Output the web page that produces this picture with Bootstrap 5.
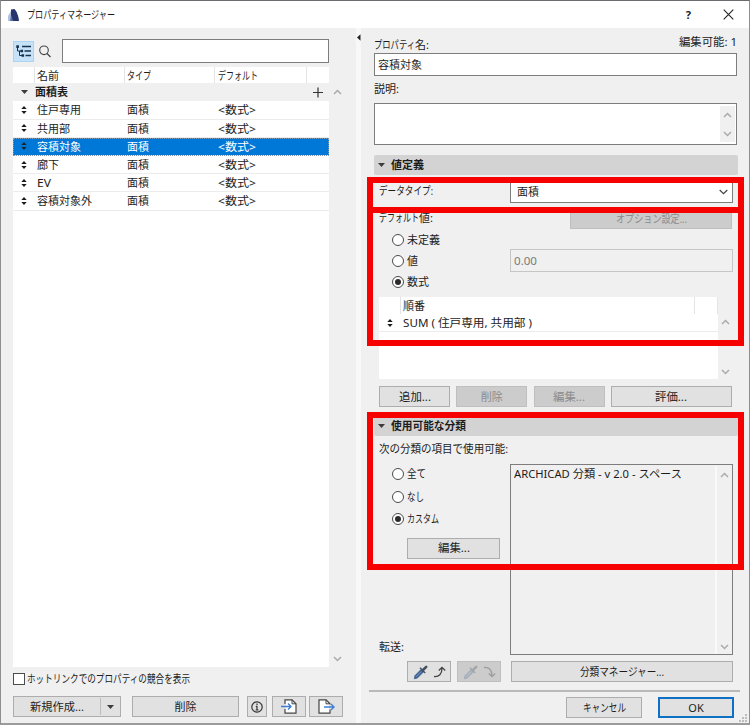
<!DOCTYPE html>
<html lang="ja">
<head>
<meta charset="utf-8">
<meta name="viewport" content="width=device-width, initial-scale=1">
<title>プロパティマネージャー</title>
<link href="https://cdn.jsdelivr.net/npm/bootstrap@5.3.0/dist/css/bootstrap.min.css" rel="stylesheet">
<style>
body{font-family:"Noto Sans","Noto Sans CJK JP",sans-serif;font-size:11px;line-height:16px;color:#1c1c1c;background:#f0f0f0;overflow:hidden}
input,button{font-family:"Noto Sans","Noto Sans CJK JP",sans-serif}
.win{width:750px;height:725px;border:1px solid #8f8f8f;border-top-color:#6d6a70;border-bottom:2px solid #9b9b9b;background:#f0f0f0}
.titlebar{height:27px;padding:0 15px 0 7px}
.help{margin-right:32px;font-size:11px}
.fit{display:inline-block;white-space:nowrap;transform-origin:left center}
.ic,.sbar svg{display:block;flex:none}
.pane-l{width:344px;padding:11px 0 0 12px}
.splitter{width:5px;background:#f8f8f8;padding-top:2px}
.gutter{width:11px}
.tree-btn{width:21px;height:21px;background:#c6e2f8;border:1px solid #add3f0}
.lens{margin:0 11px 0 5px}
.field{border:1px solid #7d7d7d;border-radius:0;background:#fff;font-size:11px;padding:0 3px;min-height:0;color:#1c1c1c;line-height:16px}
.search{width:267px;height:24px}
.list{height:600px;margin-top:4px}
.list-body{width:316px;background:#fff}
.trow{height:18.2px;border-bottom:1px solid #ececec;line-height:17px}
.trow>*{flex:none}
.c-ic{width:22px;display:flex;align-items:center;justify-content:center}
.c-name{width:90px;padding-left:2px}
.c-type{width:90px;padding-left:2px}
.c-def{width:92px;padding-left:3px}
.c-ord{width:294px;padding-left:2px}
.c-end{width:23px}
.c-expr{padding-left:2px}
.thead-row{height:17px;border:0;line-height:18px}
.list .thead-row{height:16.2px}
.thead-row>*{border-right:1px solid #e4e4e4;align-self:stretch}
.group-row{background:#f0f0f0;border:0;line-height:16px}
.picked{background:#0078d7;color:#fff;outline:1px dotted #8a9cb0;outline-offset:-1px}
.sbar{width:16px;padding:6px 0 5px}
.list>.sbar{padding-top:22px}
.btn-w{--bs-btn-padding-x:0;--bs-btn-padding-y:0;--bs-btn-font-size:11px;--bs-btn-line-height:16px;--bs-btn-border-radius:0;--bs-btn-color:#1c1c1c;--bs-btn-bg:#e1e1e1;--bs-btn-border-color:#adadad;--bs-btn-hover-bg:#e5f1fb;--bs-btn-hover-border-color:#0078d7;--bs-btn-hover-color:#1c1c1c;--bs-btn-disabled-color:#8b8b8b;--bs-btn-disabled-bg:#cccccc;--bs-btn-disabled-border-color:#bfbfbf;--bs-btn-disabled-opacity:1;height:21px;display:flex;align-items:center;justify-content:center;flex:none}
.btn-ok{--bs-btn-border-color:#0f70c4;--bs-btn-border-width:2px}
.w71{width:71px}.w76{width:76px}.w93{width:93px}.w107{width:107px}.w121{width:121px}.w222{width:222px}.w44{width:44px}.w34{width:34px}.w20{width:20px}.w162{width:162px}
.split-main{width:86px}
.split-drop{width:20px;border-left:1px solid #bdbdbd;height:17px}
.hotlink{gap:2px;height:24px}
.actions{margin-top:5px}
.gap-a{margin-left:11px}.gap-b{margin-left:8px}.gap-c{margin-left:5px}.gap-d{margin-left:3px}
.cbox{width:12px;height:12px;border:1px solid #4c4c4c;background:#fff;flex:none}
.rad{width:12px;height:12px;border:1px solid #4b4b4b;border-radius:50%;background:#fff;flex:none;display:flex;align-items:center;justify-content:center}
.rad.on::after{content:"";width:6px;height:6px;border-radius:50%;background:#2b2b2b}
.rline{height:21px;gap:3px;padding-left:18px}
.rline.tall{height:22.6px}
.rlabel{width:100px;flex:none}
.pane-r{width:376px;padding-left:12px;margin-left:1px}
.name-head{padding-top:7px;height:25px;width:363px;line-height:13px}
.name-label{padding-top:3px}
.name-box{width:363px;height:23px}
.desc-head{height:27px;padding-top:5px}
.descr{width:363px;height:42px;padding:2px 1px 2px 0}
.descr .sbar{width:15px;background:#f0f0f0}
.sect{background:#d3d3d3;border-radius:2px;width:364px;height:20px;font-weight:700;padding-left:4px;gap:6px}
.sect-a{margin-top:10px}
.sect-b{margin-top:9px}
.indent{padding-left:5px}
.indent>*{flex:none}
.type-row{padding-top:6px;height:31px}
.type-label{width:131px;padding-top:2px}
.def-row{height:23px;padding-top:2px}
.def-label{width:191px;padding-top:2px}
.dropdn{width:223px;height:22px;padding:0 4px 0 6px}
.valbox{width:223px;height:23px;background:#f0f0f0;border-color:#c6c6c6;color:#7b7b7b}
.exprs{height:82px;margin-top:5px}
.exprs .list-body{width:339px}
.exprs .sbar{width:14px;padding:22px 0 4px}
.expr-actions{margin-top:7px;gap:6.3px}
.cls-head{height:28px;padding-top:5px}
.cls-left{width:136px;margin-top:-1px;flex:none}
.cls-edit{margin:7px 0 0 33px}
.clsbox{width:223px;height:191px;background:#f0f0f0;padding-top:1px;flex:none}
.clsbox .sbar{width:17px;border-left:2px solid #f9f9f9;padding:6px 0 4px}
.transfer{margin-top:6px;padding-left:33px}
.gap-e{margin-left:6px}.gap-f{margin-left:10px}
.pip-on{--tube:#3c5f91;--shine:#7f9cc6;--cap:#44505e}
.pip-off{--tube:#a5adb9;--shine:#c2c8d0;--cap:#a3a6aa}
.rule{height:2px;background:#b9b9b9;margin:8px 0 5px -5px;width:371px}
.confirm{width:360px;gap:16px}
.frame{position:absolute;left:367px;width:377px;border:6px solid #f60000;pointer-events:none}
.frame-a{top:177px;height:36px}
.frame-b{top:207px;height:139px}
.frame-c{top:412px;height:158px}
.grip{position:absolute;right:3px;bottom:3px}
</style>
<script src="https://cdn.jsdelivr.net/npm/bootstrap@5.3.0/dist/js/bootstrap.bundle.min.js"></script>
</head>
<body>
<svg width="0" height="0" class="position-absolute">
<defs>
<symbol id="up" viewBox="0 0 9 6"><path d="M1 5 4.5 1.5 8 5" fill="none" stroke="#ababab" stroke-width="1.5"/></symbol>
<symbol id="dn" viewBox="0 0 9 6"><path d="M1 1 4.5 4.5 8 1" fill="none" stroke="#ababab" stroke-width="1.5"/></symbol>
<symbol id="sort" viewBox="0 0 6 8"><path d="M0.3 3 3 0 5.7 3zM0.3 5 3 8 5.7 5z" fill="currentColor"/></symbol>
<symbol id="tri" viewBox="0 0 7 4"><path d="M0 0h7L3.5 4z" fill="#3c3c3c"/></symbol>
<symbol id="pip" viewBox="0 0 16 16"><path d="M1.3 14.8 2 11.6 8 5.6 10.4 8 4.4 14z" fill="var(--tube)" stroke="var(--tube)" stroke-width=".8"/><path d="M3 12.8 8.6 7.2" stroke="var(--shine)" stroke-width="1"/><path d="M7 3.8 12.2 9" stroke="var(--cap)" stroke-width="1.4"/><path d="M9.5 6.5 13.2 2.8" stroke="var(--cap)" stroke-width="2.6" stroke-linecap="round"/></symbol>
</defs>
</svg>
<div class="win position-relative d-flex flex-column">
  <header class="titlebar bg-white d-flex align-items-center">
    <svg class="ic me-2" width="11" height="12" viewBox="0 0 11 12"><path d="M0 12V7L4 0V12z" fill="#b4c2e2"/><path d="M3 .5 6.500 0C8.500 2 10.600 7 11 12H4.500L3 7z" fill="#26356e"/><path d="M3 6 5 12H2z" fill="#5a6fa8"/></svg>
    <span class="fit" data-w="88">プロパティマネージャー</span>
    <span class="ms-auto help fw-bold">?</span>
    <svg class="ic" width="11" height="11" viewBox="0 0 11 11"><path d="M.7.7 10.300 10.300M10.300.7.7 10.300" stroke="#222" stroke-width="1.100"/></svg>
  </header>
  <main class="d-flex flex-grow-1">
    <section class="pane-l flex-shrink-0">
      <div class="d-flex align-items-center">
        <div class="tree-btn d-flex align-items-center justify-content-center"><svg class="ic" width="16" height="12" viewBox="0 0 16 12"><path d="M1.500 1.500V6H5M3.500 6V10.500H6" fill="none" stroke="#17324d" stroke-width="1"/><path d="M6 1.500H15M8.500 6H15M9.500 10.500H15" stroke="#17324d" stroke-width="1.700"/><path d="M.3.300h2.600v2.600H.3zM4.500 4.700h2.600v2.600H4.500zM5.500 9.200h2.600v2.600H5.500z" fill="#17324d"/></svg></div>
        <svg class="ic lens" width="12" height="13" viewBox="0 0 12 13"><circle cx="5" cy="5.300" r="4.300" fill="none" stroke="#444" stroke-width="1.100"/><path d="M8 8.500 11.500 12" stroke="#444" stroke-width="1.300"/></svg>
        <input class="form-control field search" aria-label="検索">
      </div>
      <div class="list d-flex">
        <div class="list-body">
          <div class="trow thead-row d-flex"><span class="c-ic"></span><span class="c-name">名前</span><span class="c-type"><span class="fit" data-w="24">タイプ</span></span><span class="c-def"><span class="fit" data-w="40">デフォルト</span></span></div>
          <div class="trow group-row d-flex align-items-center fw-bold"><span class="c-ic"><svg class="ic" width="7" height="4"><use href="#tri"/></svg></span><span>面積表</span><svg class="ic ms-auto me-1" width="13" height="11" viewBox="0 0 13 11"><path d="M1 5.500H11M6 .5V10.500" stroke="#333" stroke-width="1.200"/></svg></div>
          <div class="trow d-flex align-items-center"><span class="c-ic"><svg class="ic" width="6" height="8"><use href="#sort"/></svg></span><span class="c-name">住戸専用</span><span class="c-type">面積</span><span class="c-def"><span class="fit" data-w="38">&lt;数式&gt;</span></span></div>
          <div class="trow d-flex align-items-center"><span class="c-ic"><svg class="ic" width="6" height="8"><use href="#sort"/></svg></span><span class="c-name">共用部</span><span class="c-type">面積</span><span class="c-def"><span class="fit" data-w="38">&lt;数式&gt;</span></span></div>
          <div class="trow picked d-flex align-items-center"><span class="c-ic"><svg class="ic text-dark" width="6" height="8"><use href="#sort"/></svg></span><span class="c-name">容積対象</span><span class="c-type">面積</span><span class="c-def"><span class="fit" data-w="38">&lt;数式&gt;</span></span></div>
          <div class="trow d-flex align-items-center"><span class="c-ic"><svg class="ic" width="6" height="8"><use href="#sort"/></svg></span><span class="c-name">廊下</span><span class="c-type">面積</span><span class="c-def"><span class="fit" data-w="38">&lt;数式&gt;</span></span></div>
          <div class="trow d-flex align-items-center"><span class="c-ic"><svg class="ic" width="6" height="8"><use href="#sort"/></svg></span><span class="c-name"><span class="fit" data-w="14">EV</span></span><span class="c-type">面積</span><span class="c-def"><span class="fit" data-w="38">&lt;数式&gt;</span></span></div>
          <div class="trow d-flex align-items-center"><span class="c-ic"><svg class="ic" width="6" height="8"><use href="#sort"/></svg></span><span class="c-name">容積対象外</span><span class="c-type">面積</span><span class="c-def"><span class="fit" data-w="38">&lt;数式&gt;</span></span></div>
        </div>
        <div class="sbar d-flex flex-column align-items-center justify-content-between"><svg width="9" height="6"><use href="#up"/></svg><svg width="9" height="6"><use href="#dn"/></svg></div>
      </div>
      <label class="hotlink d-flex align-items-center"><span class="cbox"></span><span class="fit" data-w="163">ホットリンクでのプロパティの競合を表示</span></label>
      <div class="actions d-flex">
        <div class="btn btn-w"><span class="split-main"><span class="fit" data-w="54">新規作成...</span></span><span class="split-drop d-flex align-items-center justify-content-center"><svg class="ic" width="7" height="4"><use href="#tri"/></svg></span></div>
        <button class="btn btn-w w107 gap-a">削除</button>
        <button class="btn btn-w w20 gap-b" aria-label="情報"><svg class="ic" width="12" height="12" viewBox="0 0 12 12"><circle cx="6" cy="6" r="5.200" fill="none" stroke="#333" stroke-width="1.200"/><path d="M6 2.500V4M4.800 5.300H6V9M4.600 9H7.500" fill="none" stroke="#333" stroke-width="1.200"/></svg></button>
        <button class="btn btn-w w34 gap-c" aria-label="読み込み"><svg class="ic" width="17" height="15" viewBox="0 0 17 15"><path d="M4 .8H11L15 4.800V14.200H4z" fill="#fff" stroke="#444" stroke-width="1.200"/><path d="M11 .8V4.800H15" fill="none" stroke="#444"/><path d="M3 7.500h2" stroke="#e1e1e1" stroke-width="5"/><path d="M0 7.500H10M7 4.500 10 7.500 7 10.500" fill="none" stroke="#3f7ed6" stroke-width="1.400"/></svg></button>
        <button class="btn btn-w w34 gap-d" aria-label="書き出し"><svg class="ic" width="17" height="15" viewBox="0 0 17 15"><path d="M1 .8H8L12 4.800V14.200H1z" fill="#fff" stroke="#444" stroke-width="1.200"/><path d="M8 .8V4.800H12" fill="none" stroke="#444"/><path d="M11 8h2" stroke="#e1e1e1" stroke-width="5"/><path d="M6 8H16M13 5 16 8 13 11" fill="none" stroke="#3f7ed6" stroke-width="1.400"/></svg></button>
      </div>
    </section>
    <div class="gutter flex-shrink-0"></div>
    <div class="splitter flex-shrink-0"><svg class="ic" width="5" height="16" viewBox="0 0 5 16"><path d="M4.500 4.300V10.700L1 7.500z" fill="#222"/></svg></div>
    <section class="pane-r flex-shrink-0">
      <div class="name-head d-flex justify-content-between"><span class="name-label"><span class="fit" data-w="41">プロパティ</span>名:</span><span><span class="fit" data-w="58">編集可能: 1</span></span></div>
      <div class="field name-box d-flex align-items-center">容積対象</div>
      <div class="desc-head">説明:</div>
      <div class="field descr d-flex justify-content-end"><div class="sbar d-flex flex-column align-items-center justify-content-between"><svg width="9" height="6"><use href="#up"/></svg><svg width="9" height="6"><use href="#dn"/></svg></div></div>
      <div class="sect sect-a d-flex align-items-center"><svg class="ic" width="7" height="4"><use href="#tri"/></svg><span>値定義</span></div>
      <div class="indent type-row d-flex"><span class="type-label"><span class="fit" data-w="54">データタイプ:</span></span><div class="field dropdn d-flex align-items-center justify-content-between"><span>面積</span><svg class="ic" width="9" height="6" viewBox="0 0 9 6"><path d="M.7 1 4.500 4.700 8.300 1" fill="none" stroke="#444" stroke-width="1.200"/></svg></div></div>
      <div class="indent def-row d-flex"><span class="def-label"><span class="fit" data-w="40">デフォルト</span>値:</span><button class="btn btn-w w162" disabled><span class="fit" data-w="71">オプション設定...</span></button></div>
      <div class="rline d-flex align-items-center"><span class="rad"></span><span>未定義</span></div>
      <div class="rline d-flex align-items-center"><span class="rad"></span><span class="rlabel">値</span><div class="field valbox d-flex align-items-center flex-shrink-0"><span class="fit" data-w="23">0.00</span></div></div>
      <div class="rline d-flex align-items-center"><span class="rad on"></span><span>数式</span></div>
      <div class="indent d-flex exprs">
        <div class="list-body">
          <div class="trow thead-row d-flex"><span class="c-ic"></span><span class="c-ord">順番</span><span class="c-end"></span></div>
          <div class="trow d-flex align-items-center"><span class="c-ic"><svg class="ic" width="6" height="8"><use href="#sort"/></svg></span><span class="c-expr"><span class="fit" data-w="129">SUM ( 住戸専用, 共用部 )</span></span></div>
        </div>
        <div class="sbar d-flex flex-column align-items-center justify-content-between"><svg width="9" height="6"><use href="#up"/></svg><svg width="9" height="6"><use href="#dn"/></svg></div>
      </div>
      <div class="indent expr-actions d-flex"><button class="btn btn-w w71"><span class="fit" data-w="32">追加...</span></button><button class="btn btn-w w71" disabled>削除</button><button class="btn btn-w w71" disabled><span class="fit" data-w="32">編集...</span></button><button class="btn btn-w w121"><span class="fit" data-w="32">評価...</span></button></div>
      <div class="sect sect-b d-flex align-items-center"><svg class="ic" width="7" height="4"><use href="#tri"/></svg><span class="fit" data-w="75">使用可能な分類</span></div>
      <div class="indent cls-head"><span class="fit" data-w="129">次の分類の項目で使用可能:</span></div>
      <div class="d-flex">
        <div class="cls-left d-flex flex-column">
          <div class="rline tall d-flex align-items-center"><span class="rad"></span><span class="fit" data-w="19">全て</span></div>
          <div class="rline tall d-flex align-items-center"><span class="rad"></span><span class="fit" data-w="17">なし</span></div>
          <div class="rline tall d-flex align-items-center"><span class="rad on"></span><span class="fit" data-w="32">カスタム</span></div>
          <button class="btn btn-w w93 cls-edit"><span class="fit" data-w="32">編集...</span></button>
          <span class="indent mt-auto">転送:</span>
        </div>
        <div class="field clsbox d-flex justify-content-between pe-0"><span class="fit" data-w="168">ARCHICAD 分類 - v 2.0 - スペース</span><div class="sbar d-flex flex-column align-items-center justify-content-between"><svg width="9" height="6"><use href="#up"/></svg><svg width="9" height="6"><use href="#dn"/></svg></div></div>
      </div>
      <div class="transfer d-flex">
        <button class="btn btn-w w44" aria-label="取得"><svg class="ic pip-on" width="16" height="16"><use href="#pip"/></svg><svg class="ic ms-1" width="13" height="12" viewBox="0 0 13 12"><path d="M1 10.500C6 11 9 8 9 2M5.800 4.500 9 1.300 12.200 4.500" fill="none" stroke="#444" stroke-width="1.300"/></svg></button>
        <button class="btn btn-w w44 gap-e" disabled aria-label="適用"><svg class="ic pip-off" width="16" height="16"><use href="#pip"/></svg><svg class="ic ms-1" width="13" height="12" viewBox="0 0 13 12"><path d="M1 1.500C6 1 9 4 9 10M5.800 7.500 9 10.700 12.200 7.500" fill="none" stroke="#9c9c9c" stroke-width="1.300"/></svg></button>
        <button class="btn btn-w w222 gap-f"><span class="fit" data-w="84">分類マネージャー...</span></button>
      </div>
      <div class="rule"></div>
      <div class="confirm d-flex justify-content-end"><button class="btn btn-w w76"><span class="fit" data-w="43">キャンセル</span></button><button class="btn btn-w btn-ok w76">OK</button></div>
    </section>
  </main>
</div>
<div class="frame frame-a"></div>
<div class="frame frame-b"></div>
<div class="frame frame-c"></div>
<svg class="grip" width="8" height="8" viewBox="0 0 8 8"><path d="M6 0h2v2H6zM3 3h2v2H3zM6 3h2v2H6zM0 6h2v2H0zM3 6h2v2H3zM6 6h2v2H6z" fill="#bdbdbd"/></svg>
<script>
/* Condense UI labels to the narrow width used by the dialog font. */
document.querySelectorAll('.fit').forEach(function (el) {
  var natural = el.getBoundingClientRect().width, target = parseFloat(el.dataset.w);
  el.style.transform = 'scaleX(' + target / natural + ')';
  el.style.marginRight = (target - natural) + 'px';
});
</script>
</body>
</html>
